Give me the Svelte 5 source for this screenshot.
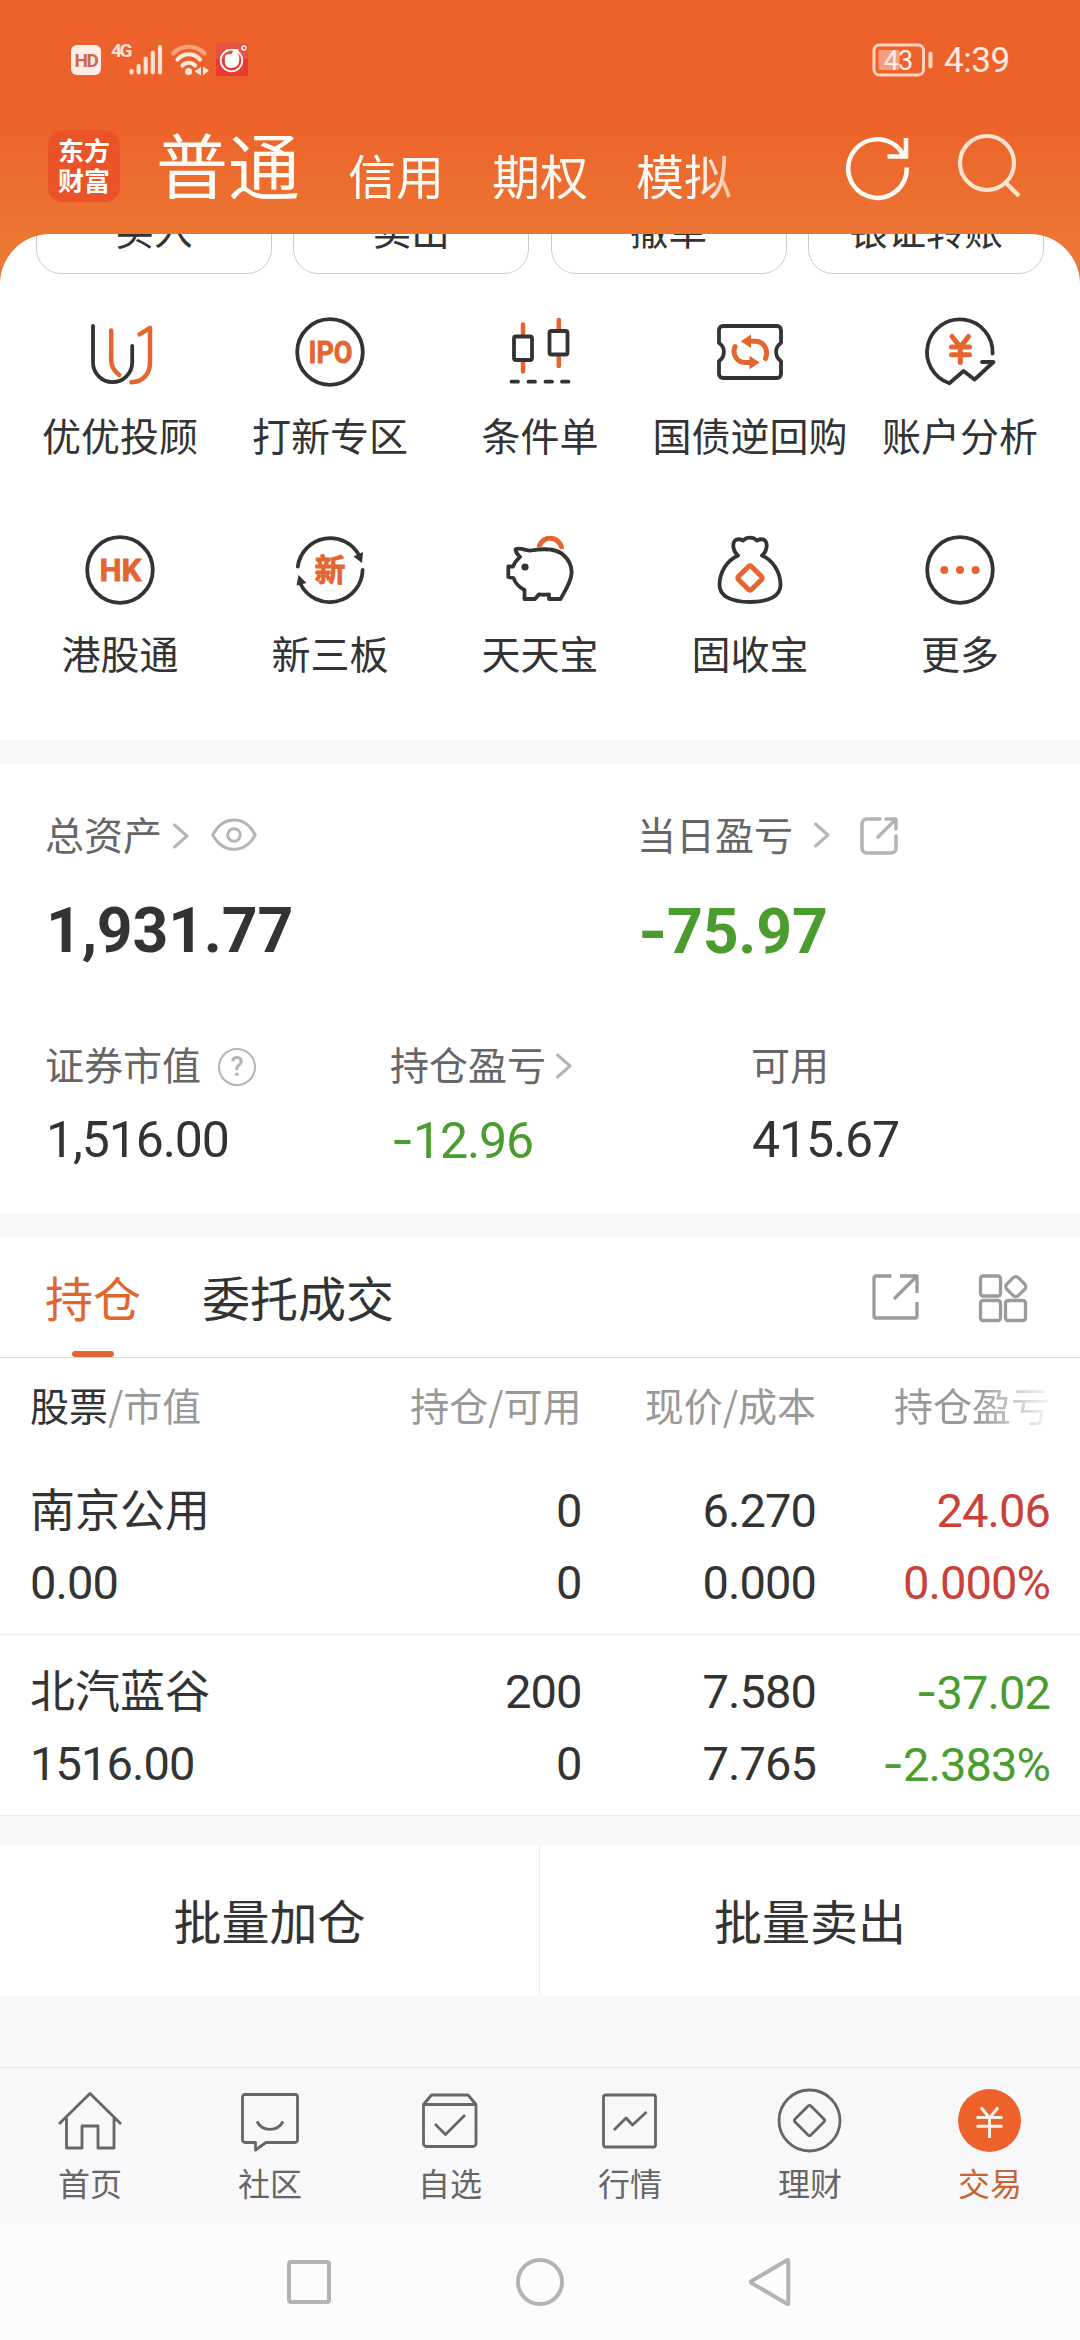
<script>
  const accounts = ['信用', '期权', '模拟'];
  const quick = ['买入', '卖出', '撤单', '银证转账'];
  const tools = [
    { id: 'uj', label: '优优投顾' },
    { id: 'ipo', label: '打新专区' },
    { id: 'candle', label: '条件单' },
    { id: 'ticket', label: '国债逆回购' },
    { id: 'analysis', label: '账户分析' },
    { id: 'hk', label: '港股通' },
    { id: 'new', label: '新三板' },
    { id: 'pig', label: '天天宝' },
    { id: 'bag', label: '固收宝' },
    { id: 'more', label: '更多' }
  ];
  const holdings = [
    { name: '南京公用', value: '0.00', qty: '0', avail: '0', price: '6.270', cost: '0.000', pl: '24.06', pct: '0.000%', tone: 'up' },
    { name: '北汽蓝谷', value: '1516.00', qty: '200', avail: '0', price: '7.580', cost: '7.765', pl: '-37.02', pct: '-2.383%', tone: 'down' }
  ];
  const nav = [
    { id: 'home', label: '首页' },
    { id: 'chat', label: '社区' },
    { id: 'fav', label: '自选' },
    { id: 'quote', label: '行情' },
    { id: 'wealth', label: '理财' },
    { id: 'trade', label: '交易' }
  ];
</script>

{#snippet chevron()}
  <svg class="chev" width="18" height="28" viewBox="0 0 18 28"><path d="M2.5 3 15 14 2.5 25" /></svg>
{/snippet}

<div class="screen">
  <div class="status">
    <span class="hd">HD</span>
    <span class="g4">4G</span>
    <svg class="signal" width="34" height="32" viewBox="0 0 34 32">
      <path d="M2.5 28.5v-1.5M9.6 28.5V22M16.7 28.5V14.500M23.800 28.500V8.500M31 28.500V3" />
    </svg>
    <svg class="wifi" width="40" height="34" viewBox="0 0 40 34">
      <path class="dim" d="M3 10.500C11.500 1.500 26 1.500 34.500 10.500" />
      <path d="M7.500 16.500C13.500 9.500 24 9.500 30 16.500" />
      <path d="M12.500 22.500C15.500 18.800 22 18.800 25 22.500" />
      <circle cx="18.500" cy="28.500" r="3.500" />
      <path class="solid" d="M31 24v8.500l-6.500-4.200zM33 23.500v9l6-5z" />
    </svg>
    <svg class="app" width="32" height="33" viewBox="0 0 32 33">
      <rect class="bg1" width="32" height="33" />
      <rect class="bg2" y="16" width="32" height="17" />
      <circle class="ring" cx="15.500" cy="17.500" r="10.800" />
      <path class="blob" d="M9.500 12.500c2-2 4-1 6-1.500 1-.5 1-3.500 3-5l4.500.5-1.500 3.500c2 3 3 9-.5 13-3 2.500-9 2.500-11 0-1.500-3-1.500-7-.5-10.500z" />
      <circle class="ring thin" cx="28" cy="5" r="2" />
    </svg>
    <svg class="battery" width="62" height="36" viewBox="0 0 62 36">
      <rect class="fill" x="7.500" y="8" width="21" height="20" rx="2" />
      <rect class="case" x="3" y="3" width="49.500" height="30" rx="5.500" />
      <path class="nub" d="M59.500 11.500v13" />
      <text x="27" y="27.500" text-anchor="middle">43</text>
    </svg>
    <span class="clock">4:39</span>
  </div>

  <header>
    <div class="logo"><span>东方</span><span>财富</span></div>
    <div class="accounts">
      <b>普通</b>
      {#each accounts as a}<span>{a}</span>{/each}
    </div>
    <svg class="refresh" width="64" height="64" viewBox="0 0 64 64">
      <path d="M60.800 32.500A29.300 29.300 0 1 1 57.500 20" />
      <path d="M60 3V21.500H41.500" />
    </svg>
    <svg class="search" width="66" height="66" viewBox="0 0 66 66">
      <circle cx="30" cy="30" r="27" />
      <path d="M48.500 49.500 62 63" />
    </svg>
  </header>

  <main>
    <div class="quick">
      {#each quick as q}<div>{q}</div>{/each}
    </div>
    <div class="tools">
      {#each tools as t}
        <div class="tool">
          <svg width="72" height="72" viewBox="0 0 72 72">
            {#if t.id === 'uj'}
              <path class="k" d="M9 10V46.500a19.600 19.600 0 0 0 39.200 0V30" />
              <path class="o" d="M27.200 14.500V44c0 7 3.500 11.500 8 15M55.500 18.300 66 11.800V46c0 13-8 20-18.500 20.200" />
            {:else if t.id === 'ipo'}
              <circle class="k" cx="36" cy="36" r="32.800" />
              <text x="14.500" y="47" textLength="44" lengthAdjust="spacingAndGlyphs">IPO</text>
            {:else if t.id === 'candle'}
              <path class="o" d="M19 8.500V18M19 47v8.500M54.800 4V13M54.800 41v9" />
              <rect class="k" x="10" y="20.500" width="18" height="23.500" rx="2" />
              <rect class="k" x="45.500" y="15" width="18" height="23.500" rx="2" />
              <path class="k" d="M7.500 65.700h6.500M24.500 65.700h6.500M41.500 65.700h6.500M58 65.700h6.500" />
            {:else if t.id === 'ticket'}
              <path class="k" d="M5 27V14a4 4 0 0 1 4-4H63a4 4 0 0 1 4 4V27c-6.500 4-6.500 14 0 18V58a4 4 0 0 1-4 4H9a4 4 0 0 1-4-4V45c6.500-4 6.500-14 0-18z" />
              <path class="o th" d="M51.500 42.500C55 34 50 25.200 41 25.200H35M21 30.500C18 38.500 23 46.500 31 46.500H37" />
              <path class="of" d="M26.800 25.200 37 18.500V31.900zM45.700 46.500 35.500 39.800V53.200z" />
            {:else if t.id === 'analysis'}
              <path class="k" d="M68.600 37.500A32.800 32.800 0 1 0 25.400 67.300L39.500 55 50.600 63.500 69.500 46H58" />
              <path class="o th" d="M28 20.500 36.300 31 44.500 20.500M36.300 31V46.500M27.500 31H45.500M27.500 38.800H45.500" />
            {:else if t.id === 'hk'}
              <circle class="k" cx="36" cy="36" r="32.800" />
              <text x="15.500" y="47" textLength="42" lengthAdjust="spacingAndGlyphs">HK</text>
            {:else if t.id === 'new'}
              <path class="k" d="M3.800 32.500A32.800 32.800 0 0 1 65.500 22M68.600 36A32.800 32.800 0 0 1 6.500 50" />
              <path class="kf" d="M59.500 22.500 69 18 68 29zM2.500 51.500 4.500 41 12.500 49z" />
              <text class="cjk" x="36" y="47" text-anchor="middle">新</text>
            {:else if t.id === 'pig'}
              <path class="k" d="M11.500 15.200C17 13 22 17 27 16.500 45 13.500 54 15.500 60 21.500 66 27 68 33 67.500 40 67 48 61 57 56.500 65H45V60.300Q40 61.200 35 60.300L31 65H20.500V56C14 52.500 11 48.500 9.500 44L4.300 43V32.500H9C10.500 28.500 13 25.500 16 22.800 13 20 11.500 18.500 11.500 15.200z" />
              <circle class="kf" cx="21" cy="33" r="3.600" />
              <path class="o th" d="M35.500 11.500C40 1.500 53 1.500 57.500 12.800" />
            {:else if t.id === 'bag'}
              <path class="k" d="M24 21.500C19 17.500 18 9.500 21 6.500 24 4 27 5.500 29 6.500 33 2.700 39 2.700 43 6.500 45 5.500 48 4 51 6.500 54 9.500 53 17.500 48 21.500 59 26.500 66.500 38 66.500 51 66.500 62 55 68 36 68S5.500 62 5.500 51C5.500 38 13 26.500 24 21.500z" />
              <rect class="o th" x="26.800" y="34.800" width="18.400" height="18.400" rx="2" transform="rotate(45 36 44)" />
            {:else}
              <circle class="k" cx="36" cy="36" r="32.800" />
              <path class="of" d="M16.300 36a4 4 0 1 0 8 0 4 4 0 1 0-8 0M32 36a4 4 0 1 0 8 0 4 4 0 1 0-8 0M47.600 36a4 4 0 1 0 8 0 4 4 0 1 0-8 0" />
            {/if}
          </svg>
          <span>{t.label}</span>
        </div>
      {/each}
    </div>
  </main>

  <section class="assets">
    <div class="major">
      <div>
        <div class="lab">
          总资产<span class="c1">{@render chevron()}</span>
          <svg class="eye" width="46" height="34" viewBox="0 0 46 34">
            <path d="M1.800 17C12-3 34-3 44.200 17 34 36 12 36 1.800 17z" />
            <circle cx="23" cy="17" r="6.300" />
          </svg>
        </div>
        <div class="big">1,931.77</div>
      </div>
      <div>
        <div class="lab">
          当日盈亏<span class="c2">{@render chevron()}</span>
          <svg class="share" width="38" height="38" viewBox="0 0 38 38">
            <path d="M20 2H7a5 5 0 0 0-5 5V31a5 5 0 0 0 5 5H31a5 5 0 0 0 5-5V19M26 2H36V12M35 3 18 20" />
          </svg>
        </div>
        <div class="big down">-75.97</div>
      </div>
    </div>
    <div class="minor">
      <div>
        <div class="lab">证券市值<span class="help">?</span></div>
        <div class="num">1,516.00</div>
      </div>
      <div>
        <div class="lab">持仓盈亏<span class="c3">{@render chevron()}</span></div>
        <div class="num down">-12.96</div>
      </div>
      <div>
        <div class="lab">可用</div>
        <div class="num">415.67</div>
      </div>
    </div>
  </section>

  <section class="tabs">
    <span class="tab on">持仓</span>
    <span class="tab">委托成交</span>
    <svg class="exp" width="48" height="48" viewBox="0 0 48 48">
      <path d="M19.500 3H4a2 2 0 0 0-2 2V43a2 2 0 0 0 2 2H43a2 2 0 0 0 2-2V29M28 3H45V20M44 4 22 26" />
    </svg>
    <svg class="apps" width="50" height="50" viewBox="0 0 50 50">
      <rect x="2.500" y="3" width="20" height="20" rx="2.500" />
      <rect x="2.500" y="27.500" width="20" height="20" rx="2.500" />
      <rect x="27.500" y="27.500" width="20" height="20" rx="2.500" />
      <rect x="29.700" y="5.500" width="16.200" height="16.200" rx="3.500" transform="rotate(45 37.800 13.600)" />
    </svg>
  </section>

  <section class="table">
    <div class="row head">
      <span><em>股票</em>/市值</span>
      <span>持仓/可用</span>
      <span>现价/成本</span>
      <span class="fade">持仓盈亏</span>
    </div>
    {#each holdings as h}
      <div class="row item">
        <span class="name">{h.name}</span>
        <span>{h.qty}</span>
        <span>{h.price}</span>
        <span class={h.tone}>{h.pl}</span>
        <span>{h.value}</span>
        <span>{h.avail}</span>
        <span>{h.cost}</span>
        <span class={h.tone}>{h.pct}</span>
      </div>
    {/each}
  </section>

  <section class="actions">
    <div>批量加仓</div>
    <div>批量卖出</div>
  </section>

  <nav>
    {#each nav as n}
      <div class:active={n.id === 'trade'}>
        <svg width="66" height="66" viewBox="0 0 66 66">
          {#if n.id === 'home'}
            <path d="M2 36 33 5.500 64 36M9.500 30V60H25V38H41V60H57V30" />
          {:else if n.id === 'chat'}
            <path d="M8 6.500H58a2.500 2.500 0 0 1 2.500 2.500V52a2.500 2.500 0 0 1-2.500 2.500H29L18.500 62V54.500H8A2.500 2.500 0 0 1 5.500 52V9A2.500 2.500 0 0 1 8 6.500zM20 33.500C25.500 44 40.500 44 46 33.500" />
          {:else if n.id === 'fav'}
            <path d="M6.500 16.500V55.500a3 3 0 0 0 3 3H56a3 3 0 0 0 3-3V16.500M6.500 16.500 14.500 7H51L59 16.500zM18 36 28.500 46.500 48 27" />
          {:else if n.id === 'quote'}
            <rect x="6.500" y="7" width="52" height="52" rx="2" />
            <path d="M17 42 29 30 35.500 37 49.500 24" />
          {:else if n.id === 'wealth'}
            <circle cx="32.500" cy="32.500" r="30.500" />
            <rect x="21.300" y="21.300" width="22.400" height="22.400" rx="2" transform="rotate(45 32.500 32.500)" />
          {:else}
            <circle class="dot" cx="32.500" cy="32.500" r="31.500" />
            <path class="yen" d="M24 19.500 32.500 30 41 19.500M32.500 29.500V50M19.500 29.500H45.500M19.500 38.300H45.500" />
          {/if}
        </svg>
        <span>{n.label}</span>
      </div>
    {/each}
  </nav>

  <div class="system">
    <svg width="50" height="50" viewBox="0 0 50 50"><rect x="5" y="5" width="40" height="40" rx="2" /></svg>
    <svg width="50" height="50" viewBox="0 0 50 50"><circle cx="25" cy="25" r="22" /></svg>
    <svg width="50" height="50" viewBox="0 0 50 50"><path d="M42.300 3.500Q42.300 2.500 41 3.300L5.500 24Q4 25 5.500 26L41 46.700Q42.300 47.500 42.300 46.500z" /></svg>
  </div>
</div>

<style>
  :global(body) {
    margin: 0;
    background: #f7f8fa;
  }
  .screen {
    width: 1080px;
    height: 2340px;
    overflow: hidden;
    display: flex;
    flex-direction: column;
    font-family: 'Noto Sans CJK SC', sans-serif;
    color: #333;
    background: linear-gradient(#ed622a 0, #ed622a 118px, #ec7633 240px, #ec7633 300px, #f7f8fa 300px);
  }
  .screen > * {
    flex: none;
    box-sizing: border-box;
  }
  svg {
    display: block;
    flex: none;
    fill: none;
    overflow: visible;
  }

  .status {
    height: 119px;
    padding: 0 70px 0 71px;
    display: flex;
    align-items: center;
    color: #ffe9df;
    font-family: Roboto, sans-serif;
  }
  .hd {
    width: 30px;
    height: 30px;
    line-height: 31px;
    border-radius: 6px;
    background: #ffeee7;
    color: #cf6844;
    text-align: center;
    font-size: 19px;
    font-weight: 700;
    letter-spacing: -1.500px;
  }
  .g4 {
    margin: -18px 0 0 10px;
    width: 18px;
    font-size: 19px;
    line-height: 20px;
    font-weight: 700;
    letter-spacing: -2.500px;
    color: #ffe0d2;
  }
  .signal { stroke: #ffe0d2; stroke-width: 4.200; stroke-linecap: round; }
  .wifi { margin-left: 7px; stroke: #ffe9df; stroke-width: 4.200; stroke-linecap: round; }
  .wifi .dim { stroke: #f9a27c; }
  .wifi circle, .wifi .solid { fill: #ffe9df; stroke: none; }
  .app { margin-left: 6px; }
  .bg1 { fill: #ea5145; }
  .bg2 { fill: #e83a30; }
  .ring { stroke: #fff; stroke-width: 1.800; }
  .ring.thin { stroke-width: 1.400; }
  .blob { fill: #fff; }
  .battery { margin-left: auto; }
  .battery .fill { fill: #f4a080; }
  .battery .case { stroke: #ffd3c0; stroke-width: 3; }
  .battery .nub { stroke: #ffd9c8; stroke-width: 4; stroke-linecap: round; }
  .battery text { fill: #ffeee6; font-size: 27px; letter-spacing: -1px; }
  .clock {
    margin-left: 11px;
    padding-top: 2px;
    font-size: 35px;
    width: 66px;
    letter-spacing: -0.400px;
    line-height: 40px;
    color: #ffeae0;
  }

  header {
    height: 115px;
    padding: 0 57px 0 48px;
    display: flex;
    align-items: flex-start;
    color: #fffaf3;
  }
  .logo {
    margin-top: 11px;
    width: 72px;
    height: 72px;
    box-sizing: border-box;
    padding-top: 5px;
    border-radius: 15px;
    background: #ea5328;
    display: flex;
    flex-direction: column;
    align-items: center;
    font-size: 26px;
    line-height: 30px;
    font-weight: 700;
    color: #fff;
  }
  .accounts {
    display: flex;
    align-items: flex-start;
    gap: 48px;
    padding-left: 36px;
    width: 640px;
    font-size: 48px;
    line-height: 48px;
    -webkit-mask-image: linear-gradient(to right, #000 575px, rgba(0, 0, 0, 0.500) 620px, transparent 640px);
    mask-image: linear-gradient(to right, #000 575px, rgba(0, 0, 0, 0.500) 620px, transparent 640px);
  }
  .accounts b {
    margin-top: 8px;
    font-size: 72px;
    line-height: 72px;
    font-weight: 400;
  }
  .accounts span { margin-top: 31px; }
  .refresh { margin: 16px 0 0 auto; stroke: #fffaf3; stroke-width: 4.600; }
  .search { margin: 14px 0 0 47px; stroke: #ffe2cf; stroke-width: 4.200; }

  main {
    height: 506px;
    border-radius: 50px 50px 0 0;
    overflow: hidden;
    background: #fff;
  }
  .quick {
    display: grid;
    grid-template-columns: repeat(4, 236px);
    gap: 21.300px;
    padding: 0 36px;
    margin-top: -50px;
  }
  .quick div {
    height: 90px;
    box-sizing: border-box;
    border: 1.500px solid #ccc;
    border-radius: 25px;
    text-align: center;
    font-size: 38.500px;
    line-height: 87px;
  }
  .tools {
    display: grid;
    grid-template-columns: repeat(5, 210px);
    justify-content: center;
    row-gap: 0;
    padding-top: 42px;
  }
  .tool {
    height: 218px;
    display: flex;
    flex-direction: column;
    align-items: center;
    font-size: 39px;
    line-height: 40px;
    white-space: nowrap;
  }
  .tool span { margin-top: 26px; }
  .k { stroke: #333; stroke-width: 3.800; stroke-linecap: round; stroke-linejoin: round; }
  .o { stroke: #e4652f; stroke-width: 4.500; stroke-linecap: round; stroke-linejoin: round; }
  .o.th { stroke-width: 5; }
  .of { fill: #e4652f; }
  .kf { fill: #333; }
  .tool text {
    fill: #e4652f;
    stroke: #e4652f;
    stroke-width: 0.800;
    stroke-linejoin: round;
    font: 700 31px Roboto, sans-serif;
  }
  .tool text.cjk { font: 700 31px 'Noto Sans CJK SC', sans-serif; }

  .assets {
    height: 449px;
    margin-top: 24px;
    padding: 49px 0 0 45px;
    background: #fff;
  }
  .major { display: grid; grid-template-columns: 592px 1fr; }
  .minor { display: grid; grid-template-columns: 345px 361px 1fr; margin-top: 82px; }
  .lab {
    height: 40px;
    display: flex;
    align-items: center;
    font-size: 39px;
    line-height: 40px;
    color: #666;
  }
  .big {
    margin: 47px 0 -1px 1px;
    font: 700 62.500px/61px Roboto, sans-serif;
    letter-spacing: -0.200px;
  }
  .num {
    margin: 32px 0 0 1px;
    font: 400 50px/50px Roboto, sans-serif;
    letter-spacing: -1.100px;
  }
  .down { color: #4a9c2f; }
  /* Inter's hyphen is wider, closer to a minus sign */
  .down::first-letter { font-family: Inter, sans-serif; }
  .up { color: #cb4038; }
  .chev, .eye, .share { stroke: #b4b4b4; stroke-width: 3; stroke-linecap: round; stroke-linejoin: round; }
  .c1 { margin: 6px 0 0 10px; }
  .c2 { margin: 4px 0 0 20px; }
  .c3 { margin: 6px 0 0 9px; }
  .eye { margin: 3px 0 0 21px; stroke-width: 2.900; }
  .share { margin-left: 29px; margin-top: 5px; stroke-width: 3.600; }
  .help {
    width: 38px;
    height: 38px;
    box-sizing: border-box;
    margin: 7px 0 0 17px;
    border: 2.500px solid #b4b4b4;
    border-radius: 50%;
    text-align: center;
    font: 500 27px/34px Roboto, sans-serif;
    color: #b4b4b4;
  }

  .tabs {
    height: 121px;
    margin-top: 24px;
    padding: 0 52px 0 45px;
    display: flex;
    background: #fff;
    border-bottom: 1px solid #dcdcdc;
    font-size: 48px;
    line-height: 118px;
  }
  .tab { margin-right: 61px; position: relative; }
  .tab.on { color: #e0662f; }
  .tab.on::after {
    content: '';
    position: absolute;
    left: 27px;
    bottom: 0;
    width: 42px;
    height: 6px;
    border-radius: 3px;
    background: #e4652f;
  }
  .exp, .apps { stroke: #9b9b9b; stroke-width: 3.300; stroke-linejoin: round; }
  .exp { margin: 36px 0 0 auto; }
  .apps { margin: 36px 0 0 58px; }

  .table { background: #fff; }
  .row {
    display: grid;
    grid-template-columns: 300px 251.500px 234.500px 234px;
    padding: 0 30px;
    text-align: right;
  }
  .row > :nth-child(4n + 1) { text-align: left; }
  .head {
    height: 96px;
    font-size: 39px;
    line-height: 93px;
    color: #999;
  }
  .head em { font-style: normal; color: #333; }
  .fade {
    -webkit-mask-image: linear-gradient(to right, #000 160px, transparent 240px);
    mask-image: linear-gradient(to right, #000 160px, transparent 240px);
  }
  .item {
    height: 181px;
    box-sizing: border-box;
    padding-top: 20px;
    grid-auto-rows: 72px;
    font-family: Roboto, sans-serif;
    font-size: 47px;
    line-height: 73px;
    letter-spacing: -0.900px;
    border-bottom: 1px solid #ebecee;
  }
  .item .name {
    font-family: 'Noto Sans CJK SC', sans-serif;
    font-size: 45px;
    line-height: 67px;
    letter-spacing: 0;
  }

  .actions {
    margin-top: 30px;
    height: 150px;
    display: grid;
    grid-template-columns: 1fr 1fr;
    background: #fff;
    text-align: center;
    font-size: 48px;
    line-height: 146px;
  }
  .actions div:first-child { border-right: 1px solid #ebecee; }

  nav {
    margin-top: 71px;
    height: 157px;
    padding-top: 20px;
    display: grid;
    grid-template-columns: repeat(6, 180px);
    background: #f8f8fa;
    border-top: 1px solid #e2e3e6;
    color: #666;
    font-size: 32px;
    line-height: 36px;
  }
  nav div { display: flex; flex-direction: column; align-items: center; }
  nav svg { stroke: #666; stroke-width: 2.800; stroke-linejoin: round; }
  nav span { margin-top: 10px; }
  nav .active { color: #c9632f; }
  nav .dot { fill: #ed622a; stroke: none; }
  nav .yen { stroke: #fff3e6; stroke-width: 3; }

  .system {
    height: 116px;
    display: flex;
    justify-content: center;
    align-items: center;
    gap: 181px;
    background: #fcfcfc;
  }
  .system svg { stroke: #b3b3b3; stroke-width: 4; }
</style>
